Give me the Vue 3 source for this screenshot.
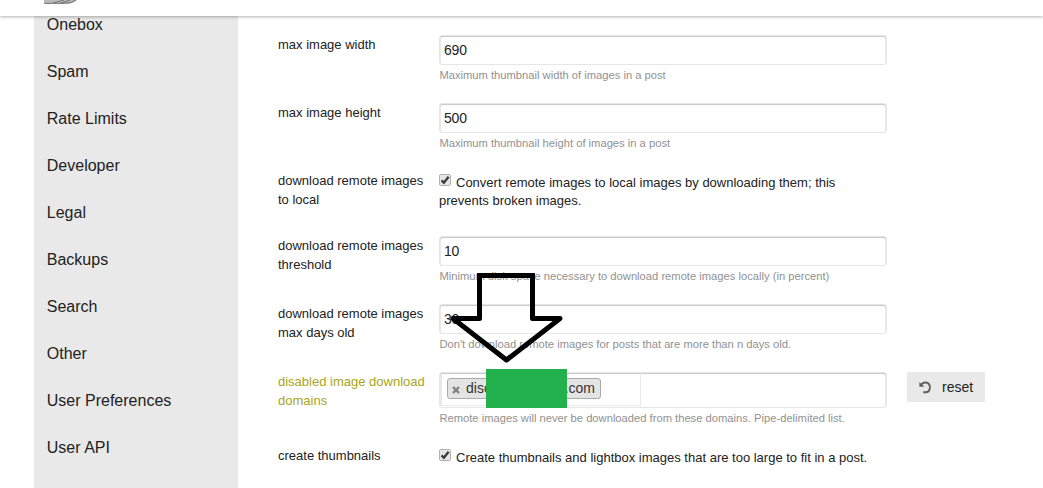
<script setup>
const nav = ['Onebox', 'Spam', 'Rate Limits', 'Developer', 'Legal', 'Backups', 'Search', 'Other', 'User Preferences', 'User API']
const settings = [
  { label: 'max image width', type: 'text', value: '690', help: 'Maximum thumbnail width of images in a post', size: 'h68' },
  { label: 'max image height', type: 'text', value: '500', help: 'Maximum thumbnail height of images in a post', size: 'h68' },
  { label: 'download remote images to local', type: 'check', help: 'Convert remote images to local images by downloading them; this prevents broken images.', size: 'h65' },
  { label: 'download remote images threshold', type: 'text', value: '10', help: 'Minimum disk space necessary to download remote images locally (in percent)', size: 'h68' },
  { label: 'download remote images max days old', type: 'text', value: '30', help: "Don't download remote images for posts that are more than n days old.", size: 'h68' },
  { label: 'disabled image download domains', type: 'list', help: 'Remote images will never be downloaded from these domains. Pipe-delimited list.', size: 'h74' },
  { label: 'create thumbnails', type: 'check', help: 'Create thumbnails and lightbox images that are too large to fit in a post.', size: 'h65' },
]
</script>

<template>
  <div class="page">
    <header class="top">
      <svg class="logo" width="36" height="4" viewBox="0 0 36 4">
        <path d="M0 0H33Q30 3 24 4H1L0 3Z" fill="#bbb" />
        <path d="M0 3.3H20Q28 3 32 0M9 3L20 0M17 3L26 0" fill="none" stroke="#666" stroke-width=".8" />
      </svg>
    </header>
    <div class="body">
      <nav class="side">
        <a v-for="n in nav" :key="n" class="item">{{ n }}</a>
      </nav>
      <main class="settings">
        <section v-for="s in settings" :key="s.label" class="row" :class="s.size">
          <div class="label" :class="{ overridden: s.type === 'list' }">{{ s.label }}</div>
          <div class="value">
            <template v-if="s.type === 'text'">
              <div class="input">{{ s.value }}</div>
              <div class="help">{{ s.help }}</div>
            </template>
            <div v-else-if="s.type === 'check'" class="check">
              <svg class="box" width="13" height="13" viewBox="0 0 13 13">
                <rect x=".5" y=".5" width="11" height="11" rx="1.2" fill="#e6e6e6" stroke="#b0b0b0" />
                <path d="M2.6 6.4L4.9 8.8L9.6 2.8" fill="none" stroke="#3a3a3a" stroke-width="2.3" />
              </svg><span>{{ s.help }}</span>
            </div>
            <template v-else>
              <div class="input list">
                <div class="choices">
                  <div class="chip">
                    <svg width="8" height="8" viewBox="0 0 8 8"><path d="M1 1L7 7M7 1L1 7" stroke="#808080" stroke-width="2.4" /></svg>
                    <span class="start">disc</span><span>.com</span>
                  </div>
                </div>
              </div>
              <div class="help">{{ s.help }}</div>
            </template>
          </div>
          <button v-if="s.type === 'list'" class="reset">
            <svg width="13" height="13" viewBox="0 0 13 13">
              <path d="M2.4 3.6C4 1 8 .5 10 3.2C12.2 6.3 10.6 11.3 6.8 11.3H4.2" fill="none" stroke="#606060" stroke-width="2" />
              <path d="M.4 .9V5.8H5.3Z" fill="#606060" />
            </svg>
            <span>reset</span>
          </button>
        </section>
      </main>
    </div>
    <div class="redaction"></div>
    <svg class="arrow" width="118" height="92" viewBox="0 0 118 92">
      <path d="M32.5 3.5H85.5V46.5H113L59.5 88L6 46.5H32.5Z" fill="none" stroke="#000" stroke-width="5" stroke-linejoin="round" />
      <path d="M32.5 40V3.5H85.5V40" fill="none" stroke="#000" stroke-width="5" />
    </svg>
  </div>
</template>

<style>
body { margin: 0; background: #fff; }
</style>

<style scoped>
.page { position: relative; width: 1043px; height: 488px; overflow: hidden; font-family: "Liberation Sans", Arial, sans-serif; font-size: 13px; color: #222; background: #fff; }
.top { position: relative; z-index: 2; height: 16px; background: #fff; box-shadow: 0 1px 3px rgba(0, 0, 0, .3); }
.logo { display: block; margin-left: 44px; }
.body { display: flex; height: 472px; }
.side { box-sizing: border-box; width: 204px; height: 487px; margin: -15px 0 0 34px; background: #e9e9e9; }
.item { display: block; height: 47px; padding-left: 12.8px; line-height: 47px; font-size: 16px; }
.settings { margin: 19px 0 0 40px; }
.row { display: flex; align-items: flex-start; }
.h65 { height: 65px; }
.h68 { height: 68px; }
.h74 { height: 74px; }
.label { width: 151px; margin-right: 10px; line-height: 19px; }
.overridden { color: #aaa51a; }
.value { width: 448px; }
.input { box-sizing: border-box; height: 30px; padding-left: 4px; border: 1px solid #e6e6e6; border-radius: 3px; box-shadow: inset 0 1px 1px rgba(0, 0, 0, .22), inset -1px 0 0 #eee, inset 1px 0 0 #eee; font-size: 14px; letter-spacing: -.2px; line-height: 29px; }
.help { margin-top: 4px; padding-left: .4px; font-size: 11.2px; line-height: 13px; color: #919191; white-space: nowrap; }
.check { width: 430px; padding-top: 3px; line-height: 18px; }
.box { margin-right: 4px; vertical-align: 0; }
.list { height: 36px; padding: 2px 0 0 1px; letter-spacing: 0; }
.choices { box-sizing: border-box; width: 200px; height: 31px; padding: 3px 0 0 5px; border: 1px solid #e9e9e9; border-top: 0; }
.chip { box-sizing: border-box; display: flex; align-items: center; width: 154px; height: 21px; padding: 0 5px 0 4px; border: 1px solid #aaa; border-radius: 3px; background: #e4e4e4; color: #333; line-height: 19px; }
.chip svg { margin: 3px 6px 0 0; }
.start { flex: 1; }
.reset { display: flex; align-items: center; box-sizing: border-box; width: 78px; height: 30px; margin-left: 20px; padding: 0 0 0 12px; border: 0; background: #e9e9e9; color: #222; font: 14px "Liberation Sans", Arial, sans-serif; }
.reset span { margin-left: 10px; }
.redaction { position: absolute; left: 486px; top: 369px; width: 81px; height: 39px; background: #22b14c; }
.arrow { position: absolute; left: 447px; top: 272px; }
</style>
